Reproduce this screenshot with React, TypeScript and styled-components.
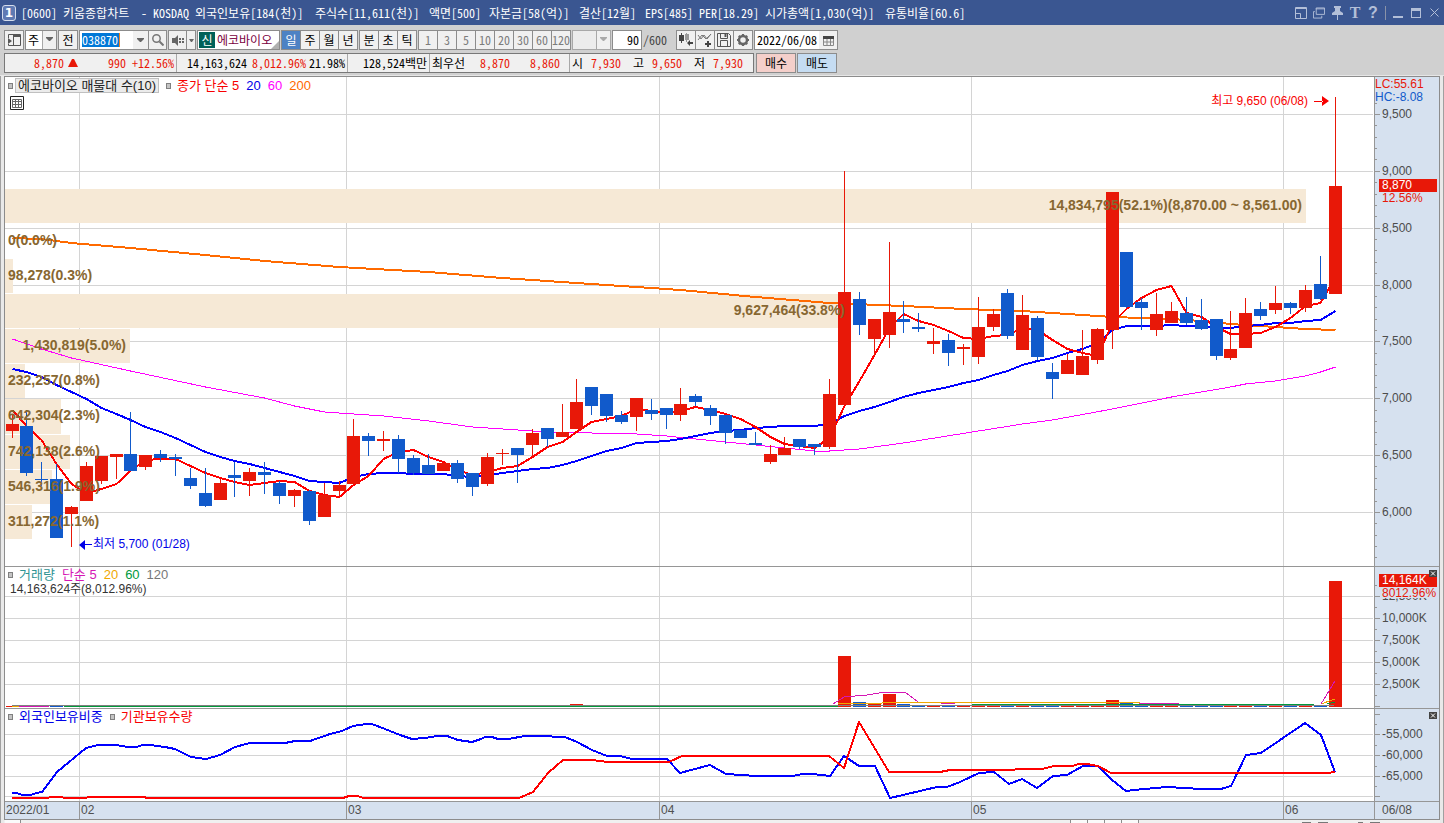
import React, { useLayoutEffect, useRef, useState } from "react";
import styled, { createGlobalStyle } from "styled-components";

const RED = "#e81808";
const BLUE = "#115acb";
const EDGE = "#969696";
const GRID = "#d4d4d4";
const AXIS = "#d6e1ef";

const GlobalStyle = createGlobalStyle`
  *, *::before, *::after { box-sizing: border-box; }
  body { margin: 0; background: #e9e9e9; }
  body, button, input, select {
    font-family: "Noto Sans Mono CJK KR", "Liberation Sans", "Noto Sans CJK KR", sans-serif;
    font-size: 12px;
    line-height: 16px;
  }
  button, input, select { margin: 0; padding: 0; border: 0; border-radius: 0; color: inherit; background: none; }
  svg { display: block; }
`;

/* ---------- window frame ---------- */

const Window = styled.div`
  min-height: 100vh;
  min-width: 1000px;
  display: flex;
  flex-direction: column;
  background: #e9e9e9;
`;

const TitleBar = styled.header`
  display: flex;
  align-items: center;
  height: 25px;
  padding: 0 4px 0 2px;
  background: #3a5691;
  color: #fff;
`;

const LinkBadge = styled.button`
  width: 14px;
  height: 16px;
  margin-right: 5px;
  border: 1px solid #d5ddec;
  border-radius: 3px;
  background: #5f7ab3;
  font: bold 12px/14px "DejaVu Sans", sans-serif;
  color: #fff;
`;

const TitleText = styled.h1`
  flex: 1;
  display: grid;
  grid-template-columns: 42px 78px 12px 42px 120px 114px 60px 90px 66px 54px 66px 120px auto;
  margin: 0;
  font-size: 12px;
  font-weight: normal;
  white-space: nowrap;
`;

const WindowTools = styled.div`
  display: flex;
  align-items: center;
  gap: 6px;
  color: #b3bfd8;
`;

const WindowButton = styled.button<{ $serif?: boolean }>`
  width: 12px;
  height: 16px;
  display: flex;
  align-items: center;
  justify-content: center;
  font: bold 16px/16px ${(p) => (p.$serif ? '"Liberation Serif", serif' : '"Liberation Sans", sans-serif')};
`;

const TitleRule = styled.i`
  width: 1px;
  height: 14px;
  background: #8a93a8;
`;

/* ---------- toolbars ---------- */

const Toolbars = styled.div`
  display: flex;
  flex-direction: column;
  gap: 3px;
  height: 51px;
  padding: 5px 4px 0;
  background: #d0d0d0;
  border-bottom: 1px solid #e6e6e6;
`;

const Bar = styled.div`
  display: flex;
  gap: 1px;
  height: 20px;
`;

const Group = styled.div<{ $width: number; $white?: boolean }>`
  flex: none;
  display: flex;
  width: ${(p) => p.$width}px;
  height: 20px;
  border: 1px solid #8c8c8c;
  background: ${(p) => (p.$white ? "#fff" : "#ececec")};
`;

const ToolButton = styled.button<{ $active?: boolean; $muted?: boolean; $width?: number }>`
  ${(p) => (p.$width ? `flex: none; width: ${p.$width}px;` : "flex: 1 1 0; min-width: 0;")}
  display: flex;
  align-items: center;
  justify-content: center;
  background: ${(p) => (p.$active ? "#4d82c4" : "#f0f0f0")};
  color: ${(p) => (p.$active ? "#fff" : p.$muted ? "#7c7c7c" : "#000")};
  & + & { border-left: 1px solid #8c8c8c; }
`;

const SelectBox = styled.label<{ $width: number; $disabled?: boolean }>`
  position: relative;
  flex: none;
  width: ${(p) => p.$width}px;
  height: 20px;
  border: 1px solid ${(p) => (p.$disabled ? "#a8a8a8" : "#8c8c8c")};
  background: linear-gradient(to left, #f0f0f0 13px, #a8a8a8 13px, #a8a8a8 14px, ${(p) => (p.$disabled ? "#ececec" : "#fff")} 14px);
  select {
    appearance: none;
    width: 100%;
    height: 18px;
    padding-left: 2px;
    outline: 0;
  }
  svg { position: absolute; right: 3px; top: 6px; pointer-events: none; }
`;

const CodeField = styled.label`
  flex: none;
  display: flex;
  align-items: center;
  width: 53px;
  padding-left: 2px;
  input {
    width: 38px;
    height: 14px;
    border-right: 1px solid #f08020;
    background: #0078d7;
    color: #fff;
    line-height: 14px;
    outline: 0;
  }
`;

const StockName = styled.div`
  position: relative;
  flex: 1;
  display: flex;
  align-items: center;
  gap: 2px;
  padding-left: 1px;
  overflow: hidden;
  color: #7a0040;
  white-space: nowrap;
  b {
    width: 16px;
    height: 16px;
    background: #006058;
    color: #fff;
    font-weight: normal;
    line-height: 16px;
    text-align: center;
  }
  &::after {
    content: "";
    position: absolute;
    right: 0;
    bottom: 0;
    border: 4px solid #b0b0b0;
    border-top-color: transparent;
    border-left-color: transparent;
  }
`;

const Field = styled.input<{ $right?: boolean }>`
  flex: 1;
  min-width: 0;
  padding: 0 2px;
  text-align: ${(p) => (p.$right ? "right" : "left")};
  background: #fff;
  outline: 0;
`;

const CountTotal = styled.span`
  width: 32px;
  line-height: 20px;
  color: #444;
`;

const Quote = styled.div`
  flex: none;
  display: grid;
  grid-template-columns: 172px 171px 82px 140px auto;
  width: 750px;
  height: 20px;
  margin-right: 1px;
  border: 1px solid #787878;
  background: #f0f0f0;
`;

const QuoteCell = styled.div<{ $cols: string }>`
  display: grid;
  grid-template-columns: ${(p) => p.$cols};
  padding-right: 2px;
  border-right: 1px solid #a8a8a8;
  line-height: 18px;
  text-align: right;
  white-space: nowrap;
  &:last-child { border-right: 0; }
`;

const Num = styled.span<{ $up?: boolean }>`
  color: ${(p) => (p.$up ? RED : "#000")};
`;

const Name = styled.span`
  padding-left: 2px;
  text-align: left;
`;

const OrderButton = styled.button<{ $buy?: boolean }>`
  width: 40px;
  height: 20px;
  border: 1px solid #8c8c8c;
  background: ${(p) => (p.$buy ? "#f4cfca" : "#c5dcf2")};
`;

/* ---------- chart panes ---------- */

const Frame = styled.div`
  flex: 1;
  display: flex;
  flex-direction: column;
  padding: 0 3px;
  border: 1px solid #a0a0a0;
  border-width: 0 1px;
`;

const Panes = styled.main`
  display: flex;
  flex-direction: column;
  border: 1px solid #8c8c8c;
  background: #fff;
  font-family: "Liberation Sans", "Noto Sans CJK KR", sans-serif;
`;

const Pane = styled.section`
  position: relative;
  display: flex;
  border-bottom: 1px solid ${EDGE};
`;

const Plot = styled.div`
  flex: 1;
  min-width: 0;
  overflow: hidden;
`;

const AxisBox = styled.div`
  flex: none;
  width: 65px;
  border-left: 1px solid ${EDGE};
  background: ${AXIS};
`;

const Legend = styled.div<{ $top: number }>`
  position: absolute;
  left: 3px;
  top: ${(p) => p.$top}px;
  display: flex;
  align-items: center;
  gap: 7px;
  height: 15px;
  font-size: 13px;
  white-space: nowrap;
`;

const Marker = styled.i<{ $tight?: boolean }>`
  width: 5px;
  height: 6px;
  margin-right: ${(p) => (p.$tight ? -5 : -1)}px;
  border: 1px solid #808080;
  background: #c4c4c4;
`;

const Series = styled.span<{ $color: string }>`
  color: ${(p) => p.$color};
`;

const Selected = styled.button`
  width: 144px;
  height: 15px;
  border: 1px solid #c0c0c0;
  background: #ebebeb;
  font-family: inherit;
  font-size: 13px;
  line-height: 13px;
  color: #222;
`;

const TableButton = styled.button`
  position: absolute;
  left: 5px;
  top: 19px;
`;

const VolumeNow = styled.p`
  position: absolute;
  left: 5px;
  top: 15px;
  margin: 0;
  line-height: 14px;
  color: #333;
`;

const ClosePane = styled.button`
  position: absolute;
  right: 2px;
  top: 3px;
  width: 8px;
  height: 7px;
  background: #444;
`;

const DateRow = styled.div`
  display: flex;
  height: 17px;
  color: #505050;
`;

const DateAxis = styled.div`
  flex: 1;
  min-width: 0;
  background: ${AXIS};
`;

const LastDate = styled.div`
  flex: none;
  width: 65px;
  padding-left: 7px;
  border-left: 1px solid ${EDGE};
  background: ${AXIS};
`;

const TabStrip = styled.footer`
  flex: 1;
  display: flex;
  min-height: 3px;
  padding-left: 1px;
  background: #f0f0f0;
`;

const Tab = styled.i<{ $width: number }>`
  width: ${(p) => p.$width}px;
  border: 1px solid #8c8c8c;
  border-width: 0 1px 0 0;
  background: #fafafa;
`;

const TabGap = styled.i`
  flex: 1;
  border-right: 1px solid #8c8c8c;
`;

const TabTools = styled.div`
  display: flex;
  align-items: flex-end;
  justify-content: flex-end;
  gap: 7px;
  width: 301px;
  padding-right: 60px;
`;

const ToolTop = styled.i<{ $width: number }>`
  width: ${(p) => p.$width}px;
  height: 1px;
  background: #777;
`;

/* ---------- data ---------- */

type Candle = [up: 0 | 1, high: number, top: number, bottom: number, low: number];

// One entry a session: rise or fall, then high, body and low on the price pane's vertical scale.
const CANDLES: Candle[] = [
  [1, 415, 424, 431, 438], [0, 410, 426, 473, 476], [0, 462, 479, 480, 486], [0, 464, 479, 538, 538], [1, 506, 507, 514, 547],
  [1, 462, 466, 501, 501], [1, 456, 456, 481, 484], [1, 454, 454, 457, 479], [0, 412, 454, 471, 471], [1, 455, 455, 467, 470],
  [0, 450, 454, 458, 462], [0, 454, 457, 459, 476], [0, 468, 478, 486, 489], [0, 468, 493, 506, 507], [1, 479, 483, 500, 500],
  [0, 462, 475, 478, 497], [1, 468, 472, 481, 496], [0, 462, 472, 475, 494], [0, 481, 483, 496, 504], [1, 489, 490, 496, 507],
  [0, 490, 491, 521, 525], [1, 483, 495, 517, 517], [1, 481, 485, 491, 496], [1, 419, 436, 484, 484], [0, 433, 436, 441, 456],
  [1, 431, 439, 441, 451], [0, 435, 439, 459, 473], [0, 455, 458, 473, 475], [0, 454, 465, 474, 474], [1, 463, 463, 471, 471],
  [0, 460, 463, 479, 483], [0, 473, 473, 487, 496], [1, 453, 457, 484, 486], [1, 449, 453, 454, 465], [0, 448, 448, 455, 483],
  [1, 429, 433, 445, 457], [0, 428, 428, 439, 447], [1, 404, 432, 437, 437], [1, 379, 402, 429, 429], [0, 387, 387, 406, 415],
  [0, 394, 394, 416, 422], [0, 411, 415, 422, 424], [1, 398, 398, 417, 431], [0, 399, 410, 414, 420], [0, 408, 408, 415, 429],
  [1, 388, 404, 415, 421], [0, 394, 396, 402, 406], [0, 405, 408, 416, 425], [0, 415, 415, 433, 444], [0, 430, 430, 438, 438],
  [0, 432, 443, 445, 445], [1, 445, 454, 462, 464], [1, 437, 448, 455, 455], [0, 439, 439, 447, 449], [0, 444, 444, 447, 455],
  [1, 379, 394, 447, 449], [1, 171, 292, 405, 405], [0, 292, 299, 325, 335], [1, 319, 319, 339, 356], [1, 242, 312, 335, 348],
  [0, 301, 319, 322, 333], [0, 313, 327, 329, 332], [1, 328, 341, 344, 354], [0, 334, 340, 353, 366], [1, 344, 347, 349, 365],
  [1, 297, 327, 357, 364], [1, 309, 314, 327, 331], [0, 289, 293, 336, 339], [1, 295, 315, 350, 350], [0, 316, 318, 357, 360],
  [0, 363, 372, 379, 399], [1, 354, 360, 374, 374], [1, 330, 356, 375, 375], [1, 328, 329, 360, 364], [1, 192, 192, 330, 349],
  [0, 252, 252, 307, 308], [0, 298, 302, 308, 330], [1, 293, 314, 330, 336], [1, 302, 311, 323, 323], [0, 297, 313, 323, 325],
  [0, 299, 320, 329, 330], [0, 319, 319, 356, 360], [1, 311, 349, 358, 360], [1, 298, 313, 348, 348], [0, 302, 309, 316, 320],
  [1, 286, 303, 310, 314], [0, 302, 303, 308, 314], [1, 285, 290, 308, 312], [0, 256, 284, 299, 300], [1, 97, 186, 294, 294],
];

const MONTHS: [session: number, label: string][] = [[5, "02"], [23, "03"], [44, "04"], [65, "05"], [86, "06"]];

const SEED_5 = [410, 426, 440, 464];
const SEED_20 = [369, 372, 377, 385, 392, 399, 408, 414, 420, 427, 432, 438, 445, 452, 457, 461, 464, 468, 472];

const average = (span: number, seed: number[]): [number, number][] => {
  const closes = CANDLES.map(([up, , top, bottom]) => (up ? top : bottom));
  return closes.map((_, i) => {
    if (i < seed.length) return [i, seed[i]];
    const part = closes.slice(i - span + 1, i + 1);
    return [i, Math.round(part.reduce((a, b) => a + b, 0) / span)];
  });
};

const MA5 = average(5, SEED_5);
const MA20 = average(20, SEED_20);
const MA60: [number, number][] = [
  [0, 339], [2, 349], [4, 358], [8, 371], [13, 387], [17, 398], [19, 406], [21, 412], [23, 414], [25, 416], [28, 421], [31, 427],
  [34, 430], [36, 432], [39, 433], [42, 434], [44, 436], [46, 439], [50, 445], [54, 451], [55, 451], [57, 449], [60, 443], [65, 431],
  [68, 424], [70, 420], [74, 409], [78, 397], [80, 392], [82, 387], [83, 384], [85, 381], [87, 376], [88, 372], [89, 367],
];
const MA200: [number, number][] = [
  [0, 238], [2, 239], [4, 243], [8, 248], [13, 255], [17, 261], [22, 267], [28, 272], [33, 278], [38, 283], [43, 288], [45, 290],
  [50, 297], [55, 303], [60, 306], [64, 309], [68, 311], [70, 313], [74, 317], [78, 319], [80, 321], [82, 324], [85, 327], [87, 329],
  [89, 330],
];

const PROFILE: [top: number, height: number, share: number, label: string][] = [
  [189, 34, 1301, "14,834,795(52.1%)(8,870.00 ~ 8,561.00)"],
  [224, 34, 0, "0(0.0%)"],
  [259, 34, 8, "98,278(0.3%)"],
  [294, 34, 844, "9,627,464(33.8%)"],
  [329, 34, 125, "1,430,819(5.0%)"],
  [364, 34, 20, "232,257(0.8%)"],
  [399, 35, 56, "642,304(2.3%)"],
  [435, 34, 65, "742,138(2.6%)"],
  [470, 34, 47, "546,316(1.9%)"],
  [505, 34, 27, "311,272(1.1%)"],
];

const VOLUME_TOPS: Record<number, number> = { 38: 704, 56: 656, 57: 702, 58: 704, 59: 694, 60: 704, 74: 700, 75: 702, 89: 581 };

type Points = [number, number][];

const VOL_5: Points[] = [
  [[833, 704], [844, 697], [867, 695], [885, 692], [905, 692], [918, 702]],
  [[941, 703], [955, 704]],
  [[1139, 703], [1179, 703]],
  [[1321, 704], [1335, 681]],
];
const VOL_20: Points[] = [[[838, 704], [842, 703], [882, 703], [883, 702], [1128, 702], [1140, 703]], [[1321, 704], [1335, 699]]];
const VOL_60: Points[] = [[[1327, 704], [1335, 702]]];

const FOREIGN: Points = [
  [12, 793], [17, 793], [22, 795], [31, 795], [36, 793], [42, 792], [57, 772], [86, 748], [98, 745], [116, 745], [128, 747], [136, 747],
  [143, 745], [150, 745], [165, 747], [175, 749], [191, 757], [206, 759], [220, 755], [235, 747], [250, 743], [285, 743], [295, 741],
  [310, 741], [330, 734], [342, 731], [353, 726], [366, 724], [372, 724], [385, 729], [400, 735], [412, 739], [425, 738], [437, 736],
  [447, 736], [458, 740], [472, 742], [481, 739], [485, 737], [492, 737], [498, 739], [508, 739], [525, 736], [538, 736], [565, 737],
  [577, 742], [592, 750], [607, 756], [620, 756], [632, 759], [667, 759], [680, 773], [710, 765], [726, 774], [757, 776], [792, 776],
  [803, 774], [813, 774], [830, 776], [844, 756], [859, 766], [875, 766], [890, 798], [920, 791], [937, 787], [947, 787], [960, 782],
  [979, 773], [994, 772], [1009, 784], [1022, 779], [1037, 788], [1053, 776], [1067, 775], [1083, 766], [1098, 766], [1112, 780],
  [1126, 791], [1144, 789], [1167, 787], [1201, 789], [1221, 789], [1231, 786], [1246, 755], [1261, 753], [1305, 723], [1321, 735],
  [1335, 772],
];
const INSTITUTION: Points = [
  [12, 798], [48, 798], [50, 797], [62, 797], [64, 798], [86, 798], [88, 797], [144, 797], [147, 798], [343, 798], [349, 796], [357, 796],
  [364, 798], [519, 798], [533, 792], [548, 773], [563, 760], [592, 760], [608, 762], [669, 762], [682, 756], [829, 756], [844, 768],
  [859, 722], [889, 772], [940, 772], [950, 770], [1014, 770], [1016, 769], [1042, 769], [1054, 766], [1072, 766], [1079, 764],
  [1087, 764], [1098, 766], [1111, 773], [1327, 773], [1335, 772],
];

/* ---------- drawing helpers ---------- */

// Width of the plot area; every pane shares it, so sessions line up.
const usePlotWidth = () => {
  const ref = useRef<HTMLDivElement>(null);
  const [width, setWidth] = useState(1369);
  useLayoutEffect(() => {
    const el = ref.current;
    if (!el) return;
    const measure = () => setWidth(el.clientWidth);
    measure();
    const watch = new ResizeObserver(measure);
    watch.observe(el);
    return () => watch.disconnect();
  }, []);
  return [ref, width] as const;
};

const SPREAD = 1323;
const left = (w: number, i: number) => Math.floor(1 + (i * (w - 46)) / 89 + 0.001);
const scaleX = (w: number, x: number) => 7 + ((x - 12) * (w - 46)) / SPREAD;
const sessionPath = (w: number, pts: Points) => pts.map(([i, y]) => `${left(w, i) + 6.5},${y}`).join(" ");
const freePath = (w: number, pts: Points) => pts.map(([x, y]) => `${scaleX(w, x)},${y}`).join(" ");

const Line = ({ points, color, width = 2 }: { points: string; color: string; width?: number }) => (
  <polyline points={points} fill="none" stroke={color} strokeWidth={width} strokeLinejoin="round" shapeRendering="crispEdges" />
);

const GridLines = ({ w, rows, top, height }: { w: number; rows: number[]; top: number; height: number }) => (
  <g fill={GRID}>
    {rows.map((y) => <rect key={y} x={0} y={y} width={w - 1} height={1} />)}
    {MONTHS.map(([i]) => <rect key={i} x={left(w, i) - 1} y={top} width={1} height={height} />)}
  </g>
);

const Ticks = ({ major, minor }: { major: number[]; minor: number[] }) => (
  <g fill={EDGE}>
    {major.map((y) => <rect key={y} x={0} y={y} width={5} height={1} />)}
    {minor.map((y) => <rect key={y} x={0} y={y} width={2} height={1} />)}
  </g>
);

const PRICE_ROWS: [number, string][] = [
  [114, "9,500"], [171, "9,000"], [228, "8,500"], [285, "8,000"], [341, "7,500"], [398, "7,000"], [455, "6,500"], [512, "6,000"],
];
const PRICE_MINOR = Array.from({ length: 42 }, (_, k) => Math.round(102.6 + k * 11.37)).filter(
  (y) => !PRICE_ROWS.some(([r]) => Math.abs(r - y) < 3) && y < 560
);
const VOLUME_ROWS: [number, string][] = [[596, "12,500K"], [618, "10,000K"], [640, "7,500K"], [662, "5,000K"], [684, "2,500K"]];
const HOLD_ROWS: [number, string][] = [[734, "-55,000"], [755, "-60,000"], [776, "-65,000"]];

const PricePlot = ({ w }: { w: number }) => (
  <svg width={w} height={489} viewBox={`0 77 ${w} 489`}>
    <GridLines w={w} rows={PRICE_ROWS.map(([y]) => y)} top={77} height={489} />
    <g fill="#f6e9d6">
      {PROFILE.map(([y, h, share]) => <rect key={y} x={0} y={y} width={(share * w) / 1369} height={h} />)}
    </g>
    <Line points={sessionPath(w, MA60)} color="#ff00ff" width={1} />
    <Line points={sessionPath(w, MA200)} color="#ff6a00" />
    <Line points={sessionPath(w, MA20)} color="#0000ff" />
    <Line points={sessionPath(w, MA5)} color="#ff0000" />
    <g shapeRendering="crispEdges">
      {CANDLES.map(([up, high, top, bottom, low], i) => (
        <g key={i} fill={up ? RED : BLUE}>
          <rect x={left(w, i) + 6} y={high} width={1} height={low - high} />
          <rect x={left(w, i)} y={top} width={13} height={bottom - top} />
        </g>
      ))}
    </g>
    <g fill="#876731" fontWeight="bold" fontSize={14}>
      {PROFILE.map(([y, , share, label]) =>
        share > 100 ? (
          <text key={y} x={(share * w) / 1369 - 4} y={y + 21} textAnchor="end">{label}</text>
        ) : (
          <text key={y} x={3} y={y + 21}>{label}</text>
        )
      )}
    </g>
    <g fill="#0000e8">
      <path d="M74 545l6-5v10zM79 544h8v1h-8z" />
      <text x={88} y={548}>최저 5,700 (01/28)</text>
    </g>
    <g fill="#f80000">
      <path d={`M${left(w, 89)} 101l-7-5v10zM${left(w, 89) - 15} 101h9v1h-9z`} />
      <text x={left(w, 89) - 21} y={105} textAnchor="end">최고 9,650 (06/08)</text>
    </g>
  </svg>
);

const PriceAxis = () => (
  <svg width={64} height={489} viewBox="0 77 64 489">
    <Ticks major={PRICE_ROWS.map(([y]) => y)} minor={PRICE_MINOR} />
    <g fill="#4c4c4c">
      {PRICE_ROWS.map(([y, t]) => <text key={y} x={7} y={y + 4}>{t}</text>)}
    </g>
    <text x={0} y={88} fill={RED}>LC:55.61</text>
    <text x={0} y={101} fill={BLUE}>HC:-8.08</text>
    <rect x={4} y={179} width={58} height={13} fill={RED} />
    <text x={7} y={189} fill="#fff">8,870</text>
    <text x={7} y={202} fill={RED}>12.56%</text>
  </svg>
);

const VolumePlot = ({ w }: { w: number }) => (
  <svg width={w} height={141} viewBox={`0 567 ${w} 141`}>
    <GridLines w={w} rows={VOLUME_ROWS.map(([y]) => y)} top={567} height={141} />
    <g shapeRendering="crispEdges">
      {CANDLES.map(([up], i) => {
        const y = VOLUME_TOPS[i] ?? 706;
        return <rect key={i} x={left(w, i)} y={y} width={13} height={707 - y} fill={up ? RED : BLUE} />;
      })}
      <rect x={7} y={705} width={w - 47} height={1} fill="#808080" />
      <rect x={7} y={706} width={7} height={1} fill="#f0a800" />
      <rect x={14} y={706} width={30} height={1} fill="#d517b5" />
      <rect x={59} y={706} width={left(w, 56) - 59} height={1} fill="#009a3c" />
      <rect x={left(w, 65)} y={704} width={left(w, 88) - left(w, 65)} height={1} fill="#009a3c" />
    </g>
    {VOL_60.map((p, k) => <Line key={k} points={freePath(w, p)} color="#009a3c" width={1} />)}
    {VOL_20.map((p, k) => <Line key={k} points={freePath(w, p)} color="#f0a800" width={1} />)}
    {VOL_5.map((p, k) => <Line key={k} points={freePath(w, p)} color="#d517b5" width={1} />)}
  </svg>
);

const VolumeAxis = () => (
  <svg width={64} height={141} viewBox="0 567 64 141">
    <Ticks major={[...VOLUME_ROWS.map(([y]) => y), 706]} minor={[585, 607, 629, 651, 673, 695]} />
    <g fill="#4c4c4c">
      {VOLUME_ROWS.map(([y, t]) => <text key={y} x={7} y={y + 4}>{t}</text>)}
    </g>
    <rect x={6} y={587} width={58} height={11} fill={AXIS} />
    <rect x={4} y={574} width={58} height={13} fill={RED} />
    <text x={7} y={584} fill="#fff">14,164K</text>
    <text x={7} y={597} fill={RED}>8012.96%</text>
  </svg>
);

const HoldPlot = ({ w }: { w: number }) => (
  <svg width={w} height={92} viewBox={`0 709 ${w} 92`}>
    <GridLines w={w} rows={[...HOLD_ROWS.map(([y]) => y), 796]} top={709} height={92} />
    <Line points={freePath(w, FOREIGN)} color="#0000ff" />
    <Line points={freePath(w, INSTITUTION)} color="#ff0000" />
  </svg>
);

const HoldAxis = () => (
  <svg width={64} height={92} viewBox="0 709 64 92">
    <Ticks major={[714, ...HOLD_ROWS.map(([y]) => y), 796]} minor={[724, 745, 766, 786]} />
    <g fill="#4c4c4c">
      {HOLD_ROWS.map(([y, t]) => <text key={y} x={7} y={y + 4}>{t}</text>)}
    </g>
  </svg>
);

const MonthAxis = ({ w }: { w: number }) => (
  <svg width={w} height={17} viewBox={`0 0 ${w} 17`} fill="#505050">
    <text x={1} y={12}>2022/01</text>
    {MONTHS.map(([i, label]) => (
      <g key={i}>
        <rect x={left(w, i) - 1} y={0} width={1} height={17} fill={EDGE} />
        <text x={left(w, i) + 1} y={12}>{label}</text>
      </g>
    ))}
  </svg>
);

/* ---------- icons ---------- */

const Caret = ({ color = "#666" }: { color?: string }) => (
  <svg width="7" height="5" viewBox="0 0 7 5"><path d="M0 0h7v1L4 4H3L0 1z" fill={color} /></svg>
);

const CloseGlyph = () => (
  <svg width="8" height="7" viewBox="0 0 8 7"><path d="M2 1.500l4 4M6 1.500l-4 4" stroke="#fff" /></svg>
);

const TITLE = [
  "[0600]", "키움종합차트", "-", "KOSDAQ", "외국인보유[184(천)]", "주식수[11,611(천)]", "액면[500]", "자본금[58(억)]",
  "결산[12월]", "EPS[485]", "PER[18.29]", "시가총액[1,030(억)]", "유통비율[60.6]",
];

export default function App() {
  const [plotRef, w] = usePlotWidth();

  return (
    <Window>
      <GlobalStyle />
      <TitleBar>
        <LinkBadge>1</LinkBadge>
        <TitleText>{TITLE.map((t) => <span key={t}>{t}</span>)}</TitleText>
        <WindowTools>
          <WindowButton aria-label="Dock">
            <svg width="12" height="12" viewBox="0 0 12 12" fill="none" stroke="currentColor"><path d="M.5.5h11v11H.5zM.5 6.500h5v5M0 1.500h12" /></svg>
          </WindowButton>
          <WindowButton aria-label="Copy window">
            <svg width="13" height="12" viewBox="0 0 13 12" fill="none" stroke="currentColor"><path d="M3.500.5h9v7h-9zM3 1.500h10M2 4.500H.5v7h9V9" /></svg>
          </WindowButton>
          <WindowButton aria-label="Pin">
            <svg width="11" height="14" viewBox="0 0 11 14" fill="currentColor"><path d="M2 0h7v2H8v3l3 2v2H6v5H5V9H0V7l3-2V2H2z" /></svg>
          </WindowButton>
          <WindowButton $serif aria-label="Text size">T</WindowButton>
          <WindowButton aria-label="Help">?</WindowButton>
          <TitleRule />
          <WindowButton aria-label="Minimize">
            <svg width="10" height="12" viewBox="0 0 10 12" fill="currentColor"><path d="M0 9h10v2H0z" /></svg>
          </WindowButton>
          <WindowButton aria-label="Maximize">
            <svg width="10" height="10" viewBox="0 0 10 10" fill="currentColor"><path d="M0 0h10v10H0zM1 3v6h8V3z" fillRule="evenodd" /></svg>
          </WindowButton>
          <WindowButton aria-label="Close">
            <svg width="9" height="9" viewBox="0 0 9 9" stroke="currentColor"><path d="M.5.5l8 8M8.500.5l-8 8" /></svg>
          </WindowButton>
        </WindowTools>
      </TitleBar>

      <Toolbars>
        <Bar>
          <Group $width={20}>
            <ToolButton aria-label="Panel">
              <svg width="14" height="13" viewBox="0 0 14 13"><path d="M1.500 4V.5h12v11h-12V10M6.500.5v11" fill="none" stroke="#555" /><path d="M1 4l4 3-4 3zM6 1h7v2H6z" fill="#555" /></svg>
            </ToolButton>
          </Group>
          <SelectBox $width={32}>
            <select aria-label="종목구분" defaultValue="주"><option>주</option></select>
            <Caret />
          </SelectBox>
          <Group $width={20}><ToolButton>전</ToolButton></Group>
          <Group $width={88} $white>
            <CodeField><input aria-label="종목코드" defaultValue="038870" /></CodeField>
            <ToolButton $width={15} aria-label="최근 종목"><Caret /></ToolButton>
            <ToolButton aria-label="검색">
              <svg width="12" height="12" viewBox="0 0 12 12" fill="none" stroke="#777"><circle cx="4.500" cy="4.500" r="3.700" strokeWidth="1.500" /><path d="M7.500 7.500l4 4" strokeWidth="2" /></svg>
            </ToolButton>
          </Group>
          <Group $width={28}>
            <ToolButton $width={17} aria-label="소리">
              <svg width="12" height="11" viewBox="0 0 12 11" fill="#666"><path d="M0 3h3l3-3v11L3 8H0zM7 3h2v2H7zM7 6h2v2H7zM10 3h2v2h-2zM10 6h2v2h-2z" /></svg>
            </ToolButton>
            <ToolButton aria-label="소리 설정"><svg width="5" height="3" viewBox="0 0 5 3"><path d="M0 0h5L3 3H2z" fill="#666" /></svg></ToolButton>
          </Group>
          <Group $width={83} $white><StockName><b>신</b>에코바이오</StockName></Group>
          <Group $width={77}>
            <ToolButton $active aria-pressed>일</ToolButton>
            <ToolButton>주</ToolButton>
            <ToolButton>월</ToolButton>
            <ToolButton>년</ToolButton>
          </Group>
          <Group $width={58}>
            <ToolButton>분</ToolButton>
            <ToolButton>초</ToolButton>
            <ToolButton>틱</ToolButton>
          </Group>
          <Group $width={153}>
            {["1", "3", "5", "10", "20", "30", "60", "120"].map((n) => <ToolButton key={n} $muted>{n}</ToolButton>)}
          </Group>
          <SelectBox $width={39} $disabled>
            <select aria-label="주기" disabled />
            <Caret color="#aaa" />
          </SelectBox>
          <Group $width={30} $white><Field aria-label="봉 개수" defaultValue="90" $right /></Group>
          <CountTotal>/600</CountTotal>
          <Group $width={77}>
            <ToolButton aria-label="차트 추가">
              <svg width="16" height="14" viewBox="0 0 16 14"><path d="M3 0h1v2h2v6H4v2H3V8H1V2h2z" fill="#444" /><path d="M8 0h1v1h2v6H9v2H8V7H7V1h1z" fill="#999" /><path d="M9 10l3-3v2h3v2h-3v2z" fill="#444" /></svg>
            </ToolButton>
            <ToolButton aria-label="지표 추가">
              <svg width="16" height="14" viewBox="0 0 16 14" fill="none"><path d="M1 7l4-5 4 4 5-5M1 2l3 4 3-4 3 4 4-5" stroke="#777" /><path d="M11 8v6M8 11h6" stroke="#444" strokeWidth="2" /></svg>
            </ToolButton>
            <ToolButton aria-label="저장">
              <svg width="14" height="14" viewBox="0 0 14 14" fill="none" stroke="#555"><path d="M.5.5h11l2 2v11H.5zM3.500.5v5h7v-5M3.500 13.500v-6h7v6" /><path d="M8.500 1v3" strokeWidth="2" /></svg>
            </ToolButton>
            <ToolButton aria-label="설정">
              <svg width="14" height="14" viewBox="0 0 14 14" fill="none" stroke="#666"><circle cx="7" cy="7" r="4" strokeWidth="2.500" /><path d="M7 1v2M7 11v2M1 7h2M11 7h2M2.800 2.800l1.400 1.400M9.800 9.800l1.400 1.400M11.200 2.800L9.800 4.200M4.200 9.800l-1.400 1.400" strokeWidth="2.200" /></svg>
            </ToolButton>
          </Group>
          <Group $width={84} $white>
            <Field aria-label="기준일" defaultValue="2022/06/08" />
            <ToolButton $width={18} aria-label="달력">
              <svg width="11" height="11" viewBox="0 0 11 11"><path d="M.5 1.500h10v9H.5zM4 4v6M7.500 4v6M1 7h9" fill="none" stroke="#888" /><path d="M0 1h11v3H0z" fill="#444" /></svg>
            </ToolButton>
          </Group>
        </Bar>

        <Bar>
          <Quote>
            <QuoteCell $cols="59px 14px 48px auto">
              <Num $up>8,870</Num>
              <svg width="14" height="18" viewBox="0 0 14 18"><path d="M4 13h10L10 5H8z" fill={RED} /></svg>
              <Num $up>990</Num>
              <Num $up>+12.56%</Num>
            </QuoteCell>
            <QuoteCell $cols="70px 59px auto">
              <Num>14,163,624</Num>
              <Num $up>8,012.96%</Num>
              <Num>21.98%</Num>
            </QuoteCell>
            <QuoteCell $cols="1fr"><Num>128,524백만</Num></QuoteCell>
            <QuoteCell $cols="40px 40px 50px">
              <Name>최우선</Name>
              <Num $up>8,870</Num>
              <Num $up>8,860</Num>
            </QuoteCell>
            <QuoteCell $cols="13px 38px 23px 38px 23px 38px">
              <Num>시</Num><Num $up>7,930</Num>
              <Num>고</Num><Num $up>9,650</Num>
              <Num>저</Num><Num $up>7,930</Num>
            </QuoteCell>
          </Quote>
          <OrderButton $buy>매수</OrderButton>
          <OrderButton>매도</OrderButton>
        </Bar>
      </Toolbars>

      <Frame>
        <Panes>
          <Pane>
            <Plot ref={plotRef}><PricePlot w={w} /></Plot>
            <AxisBox><PriceAxis /></AxisBox>
            <Legend $top={1}>
              <Marker $tight />
              <Selected>에코바이오 매물대 수(10)</Selected>
              <Marker />
              <Series $color="#f80000">종가 단순 5</Series>
              <Series $color="#0000e8">20</Series>
              <Series $color="#ff00ff">60</Series>
              <Series $color="#ff6a00">200</Series>
            </Legend>
            <TableButton aria-label="표 보기">
              <svg width="14" height="14" viewBox="0 0 14 14"><path d="M.5.5h13v13H.5z" fill="#fff" stroke="#222" /><path d="M2.500 3.500h9v8h-9zM2.500 5.500h9M2.500 8.500h9M5.500 3v8M8.500 3v8" fill="none" stroke="#666" /></svg>
            </TableButton>
          </Pane>
          <Pane>
            <Plot><VolumePlot w={w} /></Plot>
            <AxisBox><VolumeAxis /></AxisBox>
            <Legend $top={0}>
              <Marker />
              <Series $color="#2e9494">거래량</Series>
              <Series $color="#d517b5">단순 5</Series>
              <Series $color="#f0a800">20</Series>
              <Series $color="#009a3c">60</Series>
              <Series $color="#777">120</Series>
            </Legend>
            <VolumeNow>14,163,624주(8,012.96%)</VolumeNow>
            <ClosePane aria-label="거래량 닫기"><CloseGlyph /></ClosePane>
          </Pane>
          <Pane>
            <Plot><HoldPlot w={w} /></Plot>
            <AxisBox><HoldAxis /></AxisBox>
            <Legend $top={0}>
              <Marker />
              <Series $color="#0000e8">외국인보유비중</Series>
              <Marker />
              <Series $color="#f80000">기관보유수량</Series>
            </Legend>
            <ClosePane aria-label="보유 닫기"><CloseGlyph /></ClosePane>
          </Pane>
          <DateRow>
            <DateAxis><MonthAxis w={w} /></DateAxis>
            <LastDate>06/08</LastDate>
          </DateRow>
        </Panes>

        <TabStrip>
          <Tab $width={16} />
          <TabGap />
          <Tab $width={17} />
          <Tab $width={17} />
          <Tab $width={17} />
          <Tab $width={17} />
          <TabTools>
            <ToolTop $width={9} />
            <ToolTop $width={10} />
            <Tab $width={16} />
            <ToolTop $width={5} />
            <ToolTop $width={10} />
          </TabTools>
        </TabStrip>
      </Frame>
    </Window>
  );
}
